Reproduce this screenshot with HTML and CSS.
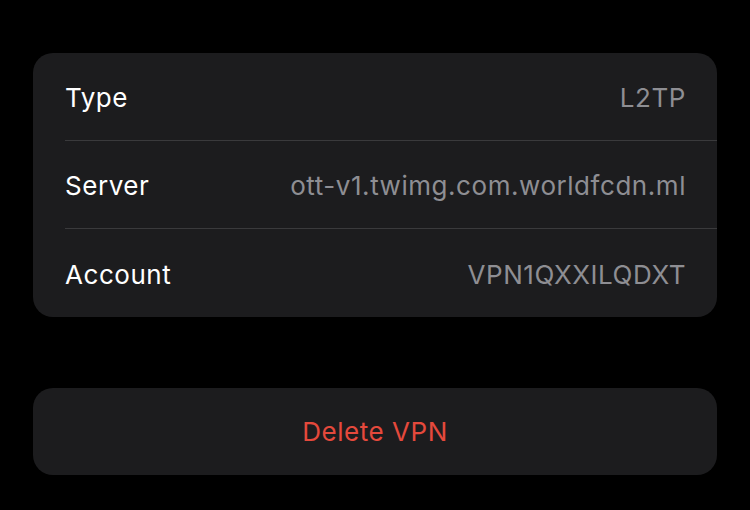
FILE: index.html
```html
<!DOCTYPE html>
<html>
<head>
<meta charset="utf-8">
<link rel="stylesheet" href="styles.css">
</head>
<body>
<div class="page">
  <div class="card">
    <div class="row"><span class="label">Type</span><span class="value">L2TP</span></div>
    <div class="row"><span class="label">Server</span><span class="value">ott-v1.twimg.com.worldfcdn.ml</span></div>
    <div class="row"><span class="label">Account</span><span class="value">VPN1QXXILQDXT</span></div>
  </div>
  <div class="card delete">
    <span class="danger">Delete VPN</span>
  </div>
</div>
</body>
</html>
```
FILE: styles.css
```css
html, body {
  margin: 0;
  background: #000;
  height: 100%;
}
.page {
  padding: 53px 33px 0 33px;
  display: flex;
  flex-direction: column;
  gap: 71px;
  font-family: Inter, "Noto Sans", sans-serif;
  font-size: 26px;
  letter-spacing: 0.55px;
}
.card {
  background: #1c1c1e;
  border-radius: 20px;
  overflow: hidden;
}
.row {
  height: 87px;
  margin-left: 32px;
  padding-right: 31px;
  display: flex;
  align-items: center;
  justify-content: space-between;
  border-bottom: 1px solid #3a3a3c;
}
.row:last-child {
  border-bottom: none;
  height: 88px;
}
.label {
  color: #ffffff;
  padding-top: 2px;
}
.value {
  color: #8e8e93;
  padding-top: 2px;
}
.delete {
  height: 87px;
  display: flex;
  align-items: center;
  justify-content: center;
}
.danger {
  color: #e5493c;
}
```
